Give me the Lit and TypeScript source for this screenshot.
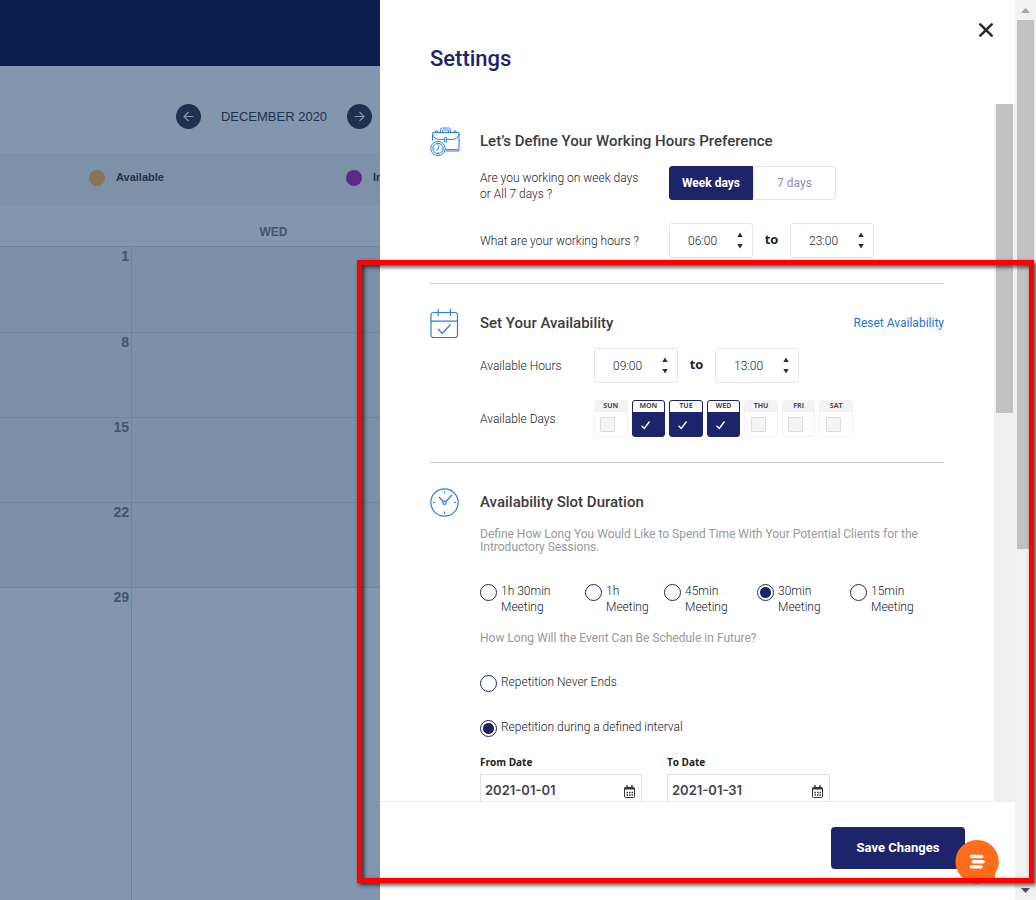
import { LitElement, html, css, svg } from "lit";
import { customElement, state } from "lit/decorators.js";
import { classMap } from "lit/directives/class-map.js";

const HOURS = Array.from({ length: 24 }, (_, i) => `${String(i).padStart(2, "0")}:00`);

/** Month grid that stays dimmed behind the settings drawer. */
@customElement("month-calendar")
class MonthCalendar extends LitElement {
  static styles = css`
    :host {
      display: flex;
      flex-direction: column;
      min-width: 0;
      overflow: hidden;
      background: #8296ae;
      color: #1d324e;
      font-family: "Liberation Sans", Arial, sans-serif;
    }
    .topbar {
      flex: 0 0 66px;
      background: #0a1f4d;
    }
    .nav {
      flex: 0 0 87px;
      display: flex;
      align-items: start;
      justify-content: flex-end;
      gap: 18px;
      padding: 38px 8px 0 0;
      box-sizing: border-box;
    }
    .month {
      margin: 0;
      padding-top: 5px;
      min-width: 110px;
      text-align: center;
      font-size: 13px;
      line-height: 16px;
      font-weight: 400;
      white-space: nowrap;
    }
    .step {
      width: 25px;
      height: 25px;
      padding: 0;
      border: 0;
      border-radius: 50%;
      background: #1d324e;
      color: #8296ae;
      display: grid;
      place-items: center;
    }
    .legend {
      flex: 0 0 52px;
      box-sizing: border-box;
      margin: 0;
      padding: 0 0 4px 89px;
      list-style: none;
      display: grid;
      grid-template-columns: 257px 200px;
      align-items: center;
      background: #7d91a9;
      font-size: 11px;
      line-height: 16px;
      font-weight: 700;
    }
    .kind {
      display: flex;
      gap: 11px;
      white-space: nowrap;
    }
    .dot {
      width: 16px;
      height: 16px;
      border-radius: 50%;
      margin-top: 1px;
    }
    .available {
      background: #8a7356;
    }
    .intro {
      background: #5f2a87;
    }
    .grid {
      flex: 1;
      min-height: 0;
    }
    table {
      width: 415px;
      height: 100%;
      table-layout: fixed;
      border-spacing: 0;
      color: #405670;
    }
    th {
      height: 41px;
      padding: 12px 0 0;
      box-sizing: border-box;
      font-size: 12px;
      line-height: 14px;
      font-weight: 700;
    }
    .edge {
      width: 132px;
    }
    td {
      box-sizing: border-box;
      height: 85px;
      padding: 1px 2px 0;
      vertical-align: top;
      text-align: right;
      border-top: 1px solid #6f849e;
      background: #7c90a8;
      font-size: 14px;
      line-height: 16px;
      font-weight: 700;
    }
    td:first-child {
      border-right: 1px solid #6f849e;
    }
    tr:first-child td {
      height: 86px;
    }
    tr:last-child td {
      height: auto;
      background: #8296ae;
    }
  `;

  render() {
    return html`
      <div class="topbar"></div>
      <div class="nav">
        <button class="step" aria-label="Previous month">
          <svg width="11" height="11" viewBox="0 0 11 11" fill="none" stroke="currentColor" stroke-width="1.2"><path d="M10.5 5.5H1.2M5.5 1L1 5.500L5.500 10" /></svg>
        </button>
        <h2 class="month">DECEMBER 2020</h2>
        <button class="step" aria-label="Next month">
          <svg width="11" height="11" viewBox="0 0 11 11" fill="none" stroke="currentColor" stroke-width="1.2"><path d="M.5 5.500H9.800M5.500 1L10 5.500L5.500 10" /></svg>
        </button>
      </div>
      <ul class="legend">
        <li class="kind"><span class="dot available"></span>Available</li>
        <li class="kind"><span class="dot intro"></span>Introductory</li>
      </ul>
      <div class="grid">
        <table>
          <thead>
            <tr><th class="edge"></th><th>WED</th></tr>
          </thead>
          <tbody>
            ${[1, 8, 15, 22, 29].map((day) => html`<tr><td>${day}</td><td></td></tr>`)}
          </tbody>
        </table>
      </div>
    `;
  }
}

/** Drop-down with an up/down pair of arrows. */
@customElement("hour-select")
class HourSelect extends LitElement {
  static properties = { value: {}, label: {} };
  declare value: string;
  declare label: string;

  static styles = css`
    :host {
      display: block;
    }
    .box {
      display: grid;
      width: 84px;
      height: 35px;
    }
    select,
    svg {
      grid-area: 1 / 1;
    }
    select {
      appearance: none;
      box-sizing: border-box;
      width: 100%;
      height: 100%;
      margin: 0;
      padding: 0 18px;
      border: 1px solid #e6e6e8;
      border-radius: 3px;
      background: #fff;
      color: #20202a;
      font: 300 12px/16px Roboto, sans-serif;
    }
    svg {
      place-self: center end;
      margin-right: 10px;
      pointer-events: none;
    }
  `;

  render() {
    return html`
      <div class="box">
        <select aria-label=${this.label}>
          ${HOURS.map((h) => html`<option ?selected=${h === this.value}>${h}</option>`)}
        </select>
        <svg width="6" height="17" viewBox="0 0 6 17" fill="#2b2b38">
          <path d="M3 .5L5.700 5H.3zM3 16.500L.3 12H5.700z" />
        </svg>
      </div>
    `;
  }
}

const blue = "#2a7fdb";

const briefcase = svg`
  <g fill="none" stroke=${blue}>
    <path d="M10.500 5.500V2.500a1.500 1.500 0 0 1 1.500-1.500h7a1.500 1.500 0 0 1 1.500 1.500V5.500M12.500 5.500V3h6V5.500" stroke-width=".9" />
    <path d="M2.500 13.500V7a1.500 1.500 0 0 1 1.500-1.500H28a1 1 0 0 1 1 1V23a1 1 0 0 1-1 1H15.500" stroke-width="1.100" />
    <path d="M2.500 7.500Q4 12 8 12.500H14M17 12.500H23Q27.500 12 29 7.500M14.500 10.500h2v4.500h-2zM5.500 5.500V4h2V5.500M24 5.500V4h2V5.500M15.500 22.500H28" stroke-width=".9" />
    <circle cx="8" cy="21.500" r="7.200" fill="#fff" />
    <circle cx="8" cy="21.500" r="5.200" />
    <path d="M9 18L8.300 22L6 23.500M8 17v1M12.300 21.500h-1M8 26v-1M3.700 21.500h1" stroke-width=".9" />
  </g>`;

const calendar = svg`
  <g fill="none" stroke=${blue} stroke-width="1.200">
    <rect x="1" y="3.500" width="26.500" height="25" rx="2.500" />
    <path d="M1 12.200H27.500M8.200 0V7M20.500 0V7" />
    <path d="M8 20L12.300 24.500L20.500 15.500" />
  </g>`;

const clock = svg`
  <g fill="none" stroke=${blue} stroke-width="1.200">
    <circle cx="14.500" cy="14.500" r="13.700" />
    <circle cx="14.500" cy="14.800" r="1.600" />
    <path d="M9 9L13.300 13.500M22 7L15.800 13.500M14.500 3.500v2M14.500 23.500v2.500M3 14.500h2M24 14.500h2" />
  </g>`;

/** Drawer with the working-hours and availability preferences. */
@customElement("settings-drawer")
class SettingsDrawer extends LitElement {
  @state() private days = new Set(["MON", "TUE", "WED"]);
  @state() private allWeek = false;

  static styles = css`
    :host {
      display: flex;
      flex-direction: column;
      min-width: 0;
      min-height: 0;
      background: #fff;
      color: #20202a;
      font: 300 12px/16px Roboto, sans-serif;
    }
    h1,
    h2,
    p,
    fieldset {
      margin: 0;
      padding: 0;
      border: 0;
      min-width: 0;
    }
    button,
    input {
      font: inherit;
      margin: 0;
    }
    .head {
      flex: 0 0 104px;
      box-sizing: border-box;
      display: flex;
      justify-content: space-between;
      align-items: flex-start;
      padding: 20px 20px 0 50px;
    }
    h1 {
      margin-top: 25px;
      font-size: 22px;
      line-height: 28px;
      font-weight: 500;
      color: #1e2469;
    }
    .close {
      display: grid;
      place-items: center;
      width: 18px;
      height: 20px;
      padding: 0;
      border: 0;
      background: none;
    }
    .body {
      flex: 1;
      min-height: 0;
      overflow: hidden;
      display: grid;
      grid-template-columns: minmax(0, 1fr) 21px;
    }
    .content {
      min-height: 0;
      overflow: hidden;
      padding: 0 50px;
    }
    .track {
      background: #f0f0f0;
      padding: 0 2px;
    }
    .thumb {
      height: 44.3%;
      background: #c1c1c1;
    }
    .section {
      display: grid;
      grid-template-columns: 50px minmax(0, 1fr);
      padding: 25px 0;
      border-bottom: 1px solid #c9c9c9;
    }
    .section:first-child {
      padding-top: 23px;
    }
    .section:last-child {
      border-bottom: 0;
    }
    .title {
      display: flex;
      justify-content: space-between;
      align-items: center;
      margin: 4px 0 15px;
    }
    h2 {
      font-size: 15px;
      line-height: 20px;
      font-weight: 500;
      color: #3c3c3c;
    }
    a {
      color: #1f74d8;
      font-weight: 400;
      text-decoration: none;
    }
    .row {
      display: grid;
      grid-template-columns: 114px minmax(0, 1fr);
      align-items: center;
      margin-top: 17px;
    }
    .wide {
      grid-template-columns: 189px minmax(0, 1fr);
      margin-top: 21px;
    }
    .title + .row {
      margin-top: 0;
    }
    .top {
      align-items: start;
    }
    .question {
      padding-top: 4px;
      max-width: 166px;
    }
    .toggle {
      display: grid;
      grid-template-columns: 84px 83px;
    }
    .option {
      height: 34px;
      padding: 0;
      border: 1px solid #e6e6e8;
      background: #fff;
      color: #8f8cb5;
      font-weight: 400;
    }
    .option:first-child {
      border-radius: 3px 0 0 3px;
    }
    .option:last-child {
      border-radius: 0 3px 3px 0;
    }
    .chosen {
      border-color: #1e2469;
      background: #1e2469;
      color: #fff;
      font-weight: 700;
    }
    .range {
      display: flex;
      align-items: center;
    }
    .to {
      width: 37px;
      padding-bottom: 3px;
      text-align: center;
      font: 700 13px/16px "Open Sans", sans-serif;
      color: #23232e;
    }
    .days {
      display: grid;
      grid-template-columns: repeat(7, minmax(0, 1fr));
      gap: 4px;
      max-width: 259px;
    }
    .day {
      display: grid;
      grid-template-rows: 11px 1fr;
      justify-items: center;
      box-sizing: border-box;
      height: 37px;
      border: 1px solid #f3f3f4;
      border-radius: 3px;
      overflow: hidden;
      background: #fff;
      font: 700 7px/10px "Open Sans", sans-serif;
      color: #4a4a54;
    }
    .name {
      width: 100%;
      text-align: center;
      background: #f3f3f4;
    }
    .day.on {
      border-color: #1e2469;
      background: #1e2469;
    }
    .on .name {
      background: #fff;
    }
    .cell {
      display: grid;
      place-items: center;
      margin-right: 6px;
    }
    .cell > * {
      grid-area: 1 / 1;
    }
    .tick {
      appearance: none;
      box-sizing: border-box;
      width: 15px;
      height: 15px;
      border: 1px solid #dcdcdc;
      border-radius: 1px;
      background: #f4f4f4;
    }
    .tick:checked {
      border-color: transparent;
      background: none;
    }
    .check {
      pointer-events: none;
    }
    .hint {
      padding-top: 1px;
      color: #98989b;
      font-weight: 400;
      line-height: 13px;
    }
    .slots {
      display: grid;
      grid-template-columns: 105fr 79fr 93fr 93fr 94fr;
      margin: 29px 0 16px;
    }
    .choice {
      display: flex;
      align-items: flex-start;
      gap: 4px;
    }
    .radio {
      appearance: none;
      flex: none;
      box-sizing: border-box;
      width: 17px;
      height: 17px;
      margin-top: 1px;
      border: 1px solid #1e2469;
      border-radius: 50%;
      background: #fff;
    }
    .radio:checked {
      background: radial-gradient(circle, #1e2469 5px, #fff 6px);
    }
    .repeat {
      display: grid;
      gap: 27px;
      margin: 29px 0 18px;
    }
    .dates {
      display: grid;
      grid-template-columns: 162px 163px;
      column-gap: 25px;
    }
    .date {
      display: grid;
      gap: 5px;
      font: 700 10px/14px "Open Sans", sans-serif;
    }
    .field {
      display: grid;
    }
    .field > * {
      grid-area: 1 / 1;
    }
    .when {
      box-sizing: border-box;
      width: 100%;
      height: 34px;
      padding: 0 30px 2px 4px;
      border: 1px solid #dfdfe6;
      background: #fff;
      color: #454550;
      font: 600 13px/16px Inter, sans-serif;
    }
    .pick {
      place-self: center end;
      margin-right: 7px;
      pointer-events: none;
    }
    .foot {
      flex: 0 0 99px;
      box-sizing: border-box;
      border-top: 1px solid #ededee;
      padding: 25px 50px 0;
      text-align: right;
    }
    .save {
      width: 134px;
      height: 42px;
      padding: 0;
      border: 0;
      border-radius: 4px;
      background: #1e2469;
      color: #fff;
      font-size: 13px;
      font-weight: 700;
    }
  `;

  private flip(day: string) {
    const next = new Set(this.days);
    if (!next.delete(day)) next.add(day);
    this.days = next;
  }

  private day(name: string) {
    const on = this.days.has(name);
    return html`
      <label class=${classMap({ day: true, on })}>
        <span class="name">${name}</span>
        <span class="cell">
          <input class="tick" type="checkbox" .checked=${on} @change=${() => this.flip(name)} />
          ${on
            ? html`<svg class="check" width="11" height="11" viewBox="0 0 11 11" fill="none" stroke="#fff" stroke-width="1.300"><path d="M1.500 6.800L4.300 9.500L9.500 2.500" /></svg>`
            : null}
        </span>
      </label>
    `;
  }

  private slotChoice(length: string) {
    return html`
      <label class="choice">
        <input class="radio" type="radio" name="slot" ?checked=${length === "30min"} />
        <span>${length}<br />Meeting</span>
      </label>
    `;
  }

  private date(label: string, value: string) {
    return html`
      <label class="date">
        ${label}
        <span class="field">
          <input class="when" type="text" .value=${value} />
          <svg class="pick" width="11" height="13" viewBox="0 0 11 13" fill="none" stroke="#33333d">
            <rect x=".5" y="2.500" width="10" height="10" rx="1" />
            <path d="M.5 3.500H10.500" stroke-width="2" />
            <path d="M3 0V3M8 0V3" stroke-width="1.400" />
            <path d="M2.500 7.500H9M2.500 10H9" stroke-dasharray="1.500 1" stroke-width="1.300" />
          </svg>
        </span>
      </label>
    `;
  }

  render() {
    return html`
      <header class="head">
        <h1>Settings</h1>
        <button class="close" aria-label="Close">
          <svg width="16" height="16" viewBox="0 0 16 16" fill="none" stroke="#2b2b38" stroke-width="2.600" stroke-linecap="round"><path d="M2.300 2.300L13.700 13.700M13.700 2.300L2.300 13.700" /></svg>
        </button>
      </header>
      <div class="body">
        <div class="content">
          <section class="section">
            <svg width="30" height="30" viewBox="0 0 30 30">${briefcase}</svg>
            <div>
              <div class="title"><h2>Let’s Define Your Working Hours Preference</h2></div>
              <div class="row wide top">
                <span class="question">Are you working on week days or All 7 days ?</span>
                <div class="toggle">
                  <button class=${classMap({ option: true, chosen: !this.allWeek })} @click=${() => (this.allWeek = false)}>Week days</button>
                  <button class=${classMap({ option: true, chosen: this.allWeek })} @click=${() => (this.allWeek = true)}>7 days</button>
                </div>
              </div>
              <div class="row wide">
                <span>What are your working hours ?</span>
                <div class="range">
                  <hour-select label="Working hours start" value="06:00"></hour-select>
                  <span class="to">to</span>
                  <hour-select label="Working hours end" value="23:00"></hour-select>
                </div>
              </div>
            </div>
          </section>
          <section class="section">
            <svg width="30" height="30" viewBox="0 0 30 30">${calendar}</svg>
            <div>
              <div class="title">
                <h2>Set Your Availability</h2>
                <a href="#reset">Reset Availability</a>
              </div>
              <div class="row">
                <span>Available Hours</span>
                <div class="range">
                  <hour-select label="Available from" value="09:00"></hour-select>
                  <span class="to">to</span>
                  <hour-select label="Available until" value="13:00"></hour-select>
                </div>
              </div>
              <div class="row">
                <span>Available Days</span>
                <div class="days">
                  ${["SUN", "MON", "TUE", "WED", "THU", "FRI", "SAT"].map((d) => this.day(d))}
                </div>
              </div>
            </div>
          </section>
          <section class="section">
            <svg width="30" height="30" viewBox="0 0 30 30">${clock}</svg>
            <div>
              <div class="title"><h2>Availability Slot Duration</h2></div>
              <p class="hint">Define How Long You Would Like to Spend Time With Your Potential Clients for the Introductory Sessions.</p>
              <fieldset class="slots" aria-label="Slot duration">
                ${["1h 30min", "1h", "45min", "30min", "15min"].map((s) => this.slotChoice(s))}
              </fieldset>
              <p class="hint">How Long Will the Event Can Be Schedule in Future?</p>
              <fieldset class="repeat" aria-label="Repetition">
                <label class="choice"><input class="radio" type="radio" name="repeat" /><span>Repetition Never Ends</span></label>
                <label class="choice"><input class="radio" type="radio" name="repeat" checked /><span>Repetition during a defined interval</span></label>
              </fieldset>
              <div class="dates">${this.date("From Date", "2021-01-01")}${this.date("To Date", "2021-01-31")}</div>
            </div>
          </section>
        </div>
        <div class="track"><div class="thumb"></div></div>
      </div>
      <footer class="foot"><button class="save">Save Changes</button></footer>
    `;
  }
}

@customElement("app-root")
class AppRoot extends LitElement {
  static styles = css`
    :host {
      display: block;
    }
    .page {
      position: relative;
      display: grid;
      grid-template-columns: minmax(0, 380fr) minmax(0, 635fr) 21px;
      grid-template-rows: minmax(0, 1fr);
      height: 100vh;
      overflow: hidden;
    }
    .scroll {
      display: flex;
      flex-direction: column;
      align-items: center;
      background: #f1f1f1;
    }
    .arrow {
      flex: 0 0 20px;
      display: grid;
      place-items: center;
    }
    .rail {
      flex: 1;
      align-self: stretch;
      padding: 0 2px;
    }
    .thumb {
      height: 61.5%;
      background: #c1c1c1;
    }
    .chat {
      position: absolute;
      right: 37px;
      bottom: 16px;
      width: 44px;
      height: 44px;
      padding: 0;
      border: 0;
      background: none;
    }
    .chat svg {
      display: block;
    }
    .marker {
      position: absolute;
      top: 260px;
      right: 2px;
      bottom: 17px;
      left: 357px;
      border: 5px solid #f00;
      filter: drop-shadow(2px 2px 2px rgba(0, 0, 0, 0.75));
      pointer-events: none;
    }
  `;

  render() {
    return html`
      <div class="page">
        <month-calendar></month-calendar>
        <settings-drawer></settings-drawer>
        <div class="scroll">
          <span class="arrow"><svg width="9" height="5" viewBox="0 0 9 5" fill="#a3a3a3"><path d="M4.500 0L9 5H0z" /></svg></span>
          <div class="rail"><div class="thumb"></div></div>
          <span class="arrow"><svg width="9" height="5" viewBox="0 0 9 5" fill="#505050"><path d="M0 0H9L4.500 5z" /></svg></span>
        </div>
        <button class="chat" aria-label="Open chat">
          <svg width="44" height="44" viewBox="0 0 44 44">
            <path d="M22 0a21.700 21.700 0 0 1 18 34V43Q37 43 33 40.500A21.700 21.700 0 1 1 22 0z" fill="#ff6d1a" />
            <path d="M16.500 16.500H26.500M18.500 21.700H28M16.500 26.800H26" stroke="#fff" stroke-width="3.600" stroke-linecap="round" />
          </svg>
        </button>
        <div class="marker"></div>
      </div>
    `;
  }
}
